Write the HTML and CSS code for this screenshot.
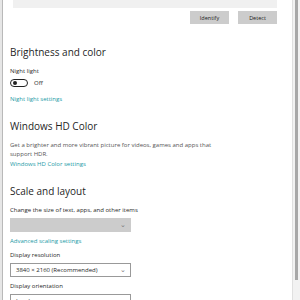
FILE: index.html
```html
<!DOCTYPE html>
<html lang="en">
<head>
    <meta charset="UTF-8">
    <title>Display settings</title>
    <link rel="stylesheet" href="styles.css">
</head>
<body>
    <div class="window">
        <div class="page">
            <!-- bottom of the arrangement area -->
            <div class="arrange"></div>
            <div class="arrange-actions">
                <button class="btn">Identify</button>
                <button class="btn">Detect</button>
            </div>

            <h2 class="section-title first">Brightness and color</h2>
            <div class="label">Night light</div>
            <div class="toggle-row">
                <span class="toggle"><span class="knob"></span></span>
                <span class="toggle-text">Off</span>
            </div>
            <a class="link">Night light settings</a>

            <h2 class="section-title">Windows HD Color</h2>
            <p class="desc">Get a brighter and more vibrant picture for videos, games and apps that support HDR.</p>
            <a class="link">Windows HD Color settings</a>

            <h2 class="section-title">Scale and layout</h2>
            <div class="label">Change the size of text, apps, and other items</div>
            <div class="select disabled"><span></span><span class="chev">&#8964;</span></div>
            <a class="link after-select">Advanced scaling settings</a>

            <div class="label spaced">Display resolution</div>
            <div class="select"><span>3840 × 2160 (Recommended)</span><span class="chev">&#8964;</span></div>

            <div class="label spaced">Display orientation</div>
            <div class="select"><span>Landscape</span><span class="chev">&#8964;</span></div>
        </div>
        <div class="scrollbar"><div class="thumb"></div></div>
    </div>
</body>
</html>
```

FILE: styles.css
```css
* {
    box-sizing: border-box;
}

body {
    margin: 0;
    background: #e6e6e6;
    font-family: 'Open Sans', sans-serif;
    color: #1f1f1f;
    overflow: hidden;
}

.window {
    display: flex;
    height: 300px;
    margin-left: 2px;
    border-left: 1px solid #b9b9b9;
    background: #fff;
}

.page {
    flex: 1;
    padding: 0 15px 0 7px;
}

.arrange {
    height: 8px;
    background: #f0f0f0;
    margin-left: 3px;
}

.arrange-actions {
    display: flex;
    justify-content: flex-end;
    gap: 9px;
    margin-top: 3px;
}

.btn {
    width: 39px;
    height: 13px;
    padding: 0;
    border: none;
    background: #cccccc;
    font-family: 'Open Sans', sans-serif;
    font-size: 5.5px;
    color: #222;
}

.section-title {
    margin: 15px 0 0;
    font-size: 10px;
    font-weight: 400;
    line-height: 14px;
}

.section-title.first {
    margin-top: 21px;
}

.label {
    font-size: 6px;
    line-height: 9px;
    margin-top: 8px;
}

.label.spaced {
    margin-top: 5px;
}

.toggle-row {
    display: flex;
    align-items: center;
    margin-top: 3px;
    height: 8px;
}

.toggle {
    width: 18px;
    height: 8px;
    border: 1px solid #222;
    border-radius: 4px;
    display: flex;
    align-items: center;
    padding-left: 2px;
}

.knob {
    width: 4px;
    height: 4px;
    border-radius: 50%;
    background: #222;
}

.toggle-text {
    font-size: 6px;
    margin-left: 6px;
}

.link {
    display: block;
    font-size: 6px;
    line-height: 9px;
    color: #1b9aa6;
    margin-top: 8px;
}

.link.after-select {
    margin-top: 5px;
}

.desc {
    margin: 8px 0 0;
    width: 210px;
    font-size: 6px;
    line-height: 9px;
    color: #555;
}

.desc + .link {
    margin-top: 1px;
}

.select {
    width: 121px;
    height: 14px;
    margin-top: 3px;
    border: 1px solid #999;
    display: flex;
    align-items: center;
    justify-content: space-between;
    padding: 0 4px 0 5px;
    font-size: 6px;
}

.select.disabled {
    background: #cccccc;
    border-color: #cccccc;
    color: #999;
}

.chev {
    font-size: 7px;
    line-height: 4px;
    color: #777;
}

.scrollbar {
    width: 8px;
    background: #f2f2f2;
    border-left: 1px solid #e0e0e0;
    padding-left: 2px;
}

.thumb {
    width: 3px;
    height: 280px;
    background: #a8a8a8;
}
```
